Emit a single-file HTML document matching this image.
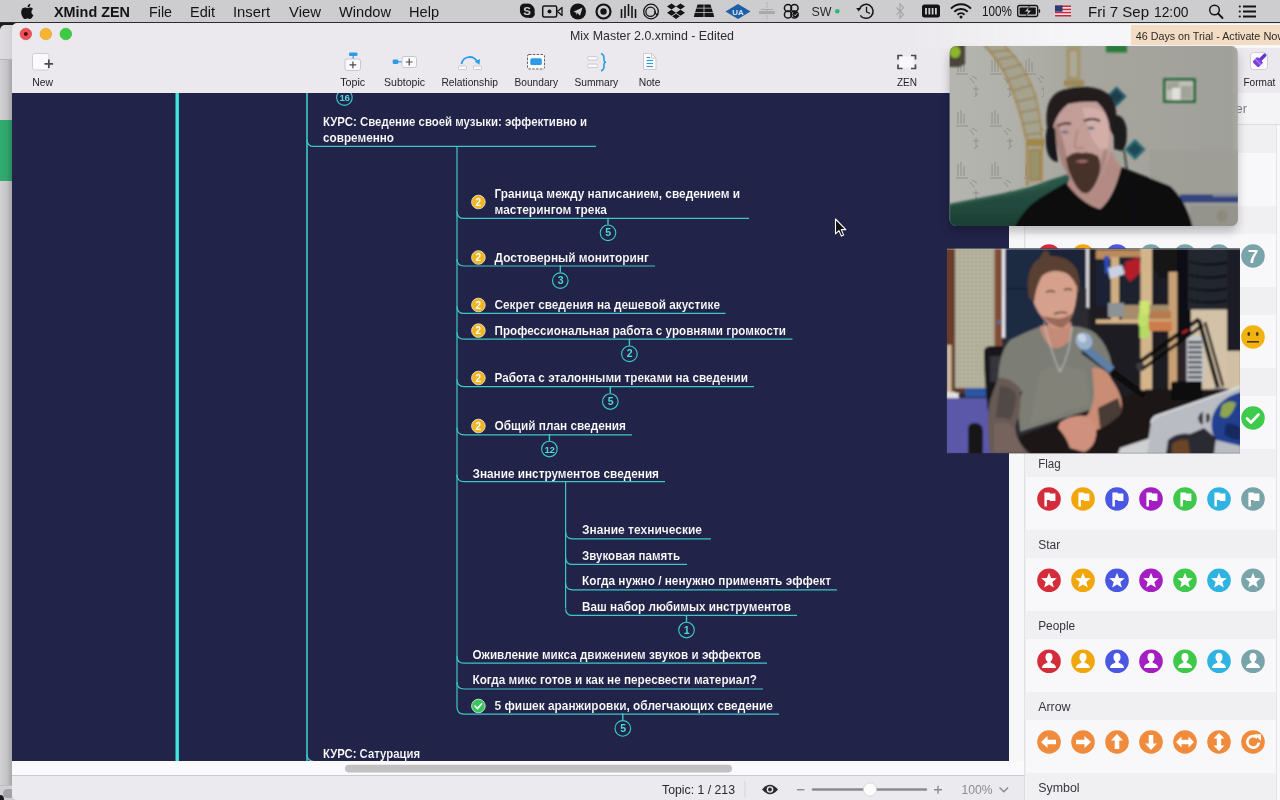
<!DOCTYPE html>
<html><head><meta charset="utf-8">
<style>
*{box-sizing:border-box;margin:0;padding:0}
html,body{width:1280px;height:800px;overflow:hidden;background:#c9c8ca;font-family:"Liberation Sans",sans-serif;}
.abs{position:absolute}
svg{will-change:transform}
#menubar{left:0;top:0;width:1280px;height:23px;background:#cdccce;border-bottom:1px solid #2c2c2e}
#menubar span{position:absolute;top:2px;font-size:15px;color:#141414;white-space:nowrap}
#leftstrip{left:0;top:23px;width:12px;height:777px;background:linear-gradient(90deg,#d2d1d3 0,#c6c5c8 55%,#a5a4a8 100%)}
#win{left:12px;top:23px;width:1268px;height:777px;background:#ebe9ed;border-radius:5px 0 0 5px;overflow:hidden}
#canvas{left:0;top:70px;width:997px;height:668px;background:#212349}
.lbl{position:absolute;top:75.5px;font-size:11px;color:#2a2a2c;white-space:nowrap;transform:translateX(-50%)}
#panel{left:1013px;top:70px;width:255px;height:707px;background:#f8f7f9}
.band{position:absolute;left:0;width:251px;height:28px;background:#efeef1}
</style></head>
<body>
<div id="leftstrip" class="abs"></div>
<div class="abs" style="left:0;top:23px;width:16px;height:8px;background:#1c1c1e"></div>
<div class="abs" style="left:0;top:25px;width:16px;height:34px;background:linear-gradient(90deg,#dddcde 0,#d6d5d8 60%,#c2c1c5 100%);border-radius:5px 0 0 0"></div>
<div class="abs" style="left:0;top:59px;width:12px;height:1px;background:#b4b3b7"></div>
<div class="abs" style="left:0;top:120px;width:12px;height:61px;background:linear-gradient(90deg,#31ab70 0,#2ea46b 60%,#27895a 100%)"></div>
<div id="win" class="abs">
  <div id="canvas" class="abs"></div>
  <div class="abs" style="left:0;top:738px;width:1013px;height:15px;background:#faf9fb;border-bottom:1px solid #c9c8cb"></div>
  <div class="abs" style="left:0;top:753px;width:1013px;height:24px;background:#ebeaee"></div>
  <div class="abs" style="left:997px;top:70px;width:16px;height:668px;background:#f6f5f7"></div>
  <div id="panel" class="abs"></div>
</div>
<div id="menubar" class="abs"></div>
<svg class="abs" style="left:0;top:0" width="1280" height="23" viewBox="0 0 1280 23" font-family="Liberation Sans, sans-serif">
<g transform="translate(19.5,2.5) scale(0.95)" fill="#141414"><path d="M12.6 9.9c0-2 1.6-2.9 1.7-3-0.9-1.4-2.4-1.5-2.9-1.6-1.2-0.1-2.4 0.7-3 0.7-0.6 0-1.6-0.7-2.6-0.7C4.400 5.300 3.100 6.100 2.400 7.300 1 9.800 2 13.400 3.400 15.400c0.700 1 1.500 2.100 2.500 2 1-0.040 1.400-0.650 2.600-0.650 1.200 0 1.600 0.650 2.600 0.630 1.100-0.020 1.800-1 2.400-2 0.800-1.100 1.100-2.200 1.100-2.300-0.020-0.010-2.100-0.800-2.100-3.200z"/><path d="M10.700 3.900c0.500-0.700 0.900-1.600 0.800-2.500-0.800 0.030-1.700 0.500-2.300 1.200-0.500 0.600-0.900 1.500-0.800 2.400 0.900 0.070 1.800-0.450 2.300-1.100z"/></g>
<text x="54" y="16.5" font-size="15" font-weight="bold" fill="#141414" text-anchor="start" textLength="76" lengthAdjust="spacingAndGlyphs" >XMind ZEN</text>
<text x="149" y="16.5" font-size="15" font-weight="normal" fill="#141414" text-anchor="start" textLength="23" lengthAdjust="spacingAndGlyphs" >File</text>
<text x="190" y="16.5" font-size="15" font-weight="normal" fill="#141414" text-anchor="start" textLength="25" lengthAdjust="spacingAndGlyphs" >Edit</text>
<text x="233" y="16.5" font-size="15" font-weight="normal" fill="#141414" text-anchor="start" textLength="37" lengthAdjust="spacingAndGlyphs" >Insert</text>
<text x="289" y="16.5" font-size="15" font-weight="normal" fill="#141414" text-anchor="start" textLength="32" lengthAdjust="spacingAndGlyphs" >View</text>
<text x="339" y="16.5" font-size="15" font-weight="normal" fill="#141414" text-anchor="start" textLength="52" lengthAdjust="spacingAndGlyphs" >Window</text>
<text x="409" y="16.5" font-size="15" font-weight="normal" fill="#141414" text-anchor="start" textLength="30" lengthAdjust="spacingAndGlyphs" >Help</text>
<path d="M520 7 a4.5 4.500 0 0 1 6-3.300 a7.300 7.300 0 0 1 8.600 8.400 a4.500 4.500 0 0 1 -6 5.600 a7.300 7.300 0 0 1 -8.600 -8.400 a4.500 4.500 0 0 1 0 -2.300z" fill="#141414"/>
<text x="527.2" y="15.4" font-size="11.5" font-weight="bold" fill="#cdccce" text-anchor="middle" >S</text>
<rect x="542.7" y="6" width="14" height="11" rx="1.5" fill="none" stroke="#141414" stroke-width="1.500"/><circle cx="549.5" cy="11.5" r="2" fill="#141414"/><path d="M557.5 11.5 L562 7.500 V15.500z" fill="none" stroke="#141414" stroke-width="1.300" stroke-linejoin="round"/>
<circle cx="578" cy="11.5" r="8" fill="#141414"/><path d="M573.5 11.800 L582.500 7.500 L580 15.800 L577.500 13 L576.500 15 L576.300 12.700z" fill="#cdccce"/>
<circle cx="603.5" cy="11.5" r="7" fill="none" stroke="#141414" stroke-width="2.200"/><circle cx="603.5" cy="11.5" r="3.200" fill="#141414"/>
<path d="M621.5 9 V18" stroke="#141414" stroke-width="1.600"/>
<path d="M625 6 V18" stroke="#141414" stroke-width="1.600"/>
<path d="M628.5 4 V16" stroke="#141414" stroke-width="1.600"/>
<path d="M632 6 V18" stroke="#141414" stroke-width="1.600"/>
<path d="M635.5 9 V18" stroke="#141414" stroke-width="1.600"/>
<circle cx="651" cy="11.5" r="7.300" fill="none" stroke="#141414" stroke-width="1.300"/><circle cx="650.5" cy="11.800" r="4.600" fill="none" stroke="#141414" stroke-width="1.300"/><path d="M655.200 11 q0 4.500 3 3" fill="none" stroke="#141414" stroke-width="1.200"/>
<g fill="#141414"><path d="M671.500 3.500 l-4.500 3 l4.500 3 l4.500 -3z"/><path d="M680.500 3.500 l-4.500 3 l4.500 3 l4.500 -3z"/><path d="M671.500 9.700 l-4.500 3 l4.500 3 l4.500 -3z"/><path d="M680.500 9.700 l-4.500 3 l4.500 3 l4.500 -3z"/><path d="M676 13.800 l-3.800 2.500 l3.800 2.600 l3.800 -2.600z"/></g>
<g fill="#141414"><path d="M697.500 4.500 h13 l1 3.300 h-15z"/><path d="M696.200 8.600 h15.600 l1 3.400 h-17.600z"/><path d="M694.800 12.800 h18.400 l1 4.200 h-20.400z"/></g><path d="M704 4.500 V17" stroke="#cdccce" stroke-width="0.800"/>
<path d="M725.500 11.500 L738 4 L750.500 11.500 L738 19z" fill="#1d5ea6"/>
<text x="738" y="14.8" font-size="8" font-weight="bold" fill="#d8e4f2" text-anchor="middle" >UA</text>
<g stroke="#a9a8ab" fill="none"><path d="M767 2.500 V19.500" stroke-width="1" stroke-dasharray="2 1.200"/><path d="M759 11 h16 v3 h-16z" fill="#a9a8ab" stroke="none"/><path d="M761 9.500 h12" stroke-width="1"/></g>
<g fill="none" stroke="#141414" stroke-width="1.500"><circle cx="788" cy="8" r="3.600"/><circle cx="794.500" cy="8" r="3.600"/><circle cx="788" cy="14.500" r="3.600"/><circle cx="794.500" cy="14.500" r="3.600"/></g><circle cx="795.500" cy="14.500" r="3" fill="#141414"/><path d="M794 14.500 l1.200 1.300 l2-2.500" stroke="#cdccce" stroke-width="1" fill="none"/>
<text x="811.5" y="16" font-size="13.5" font-weight="normal" fill="#2a2a2a" text-anchor="start" textLength="20" lengthAdjust="spacingAndGlyphs" >SW</text>
<circle cx="837.300" cy="11.300" r="2.300" fill="#2fb875"/>
<path d="M859.500 9 A7 7 0 1 1 860.300 15.300" fill="none" stroke="#141414" stroke-width="1.500"/><path d="M856.200 8 h5 l-2.500 3.600z" fill="#141414"/><path d="M866.500 6.800 V11.800 L870 13.500" fill="none" stroke="#141414" stroke-width="1.300"/>
<path d="M896.500 7.500 L903.500 14.500 L900 18 V4 L903.500 7.800 L896.500 14.800" fill="none" stroke="#a5a4a7" stroke-width="1.100"/>
<rect x="922" y="4.500" width="18" height="13" rx="2.500" fill="#141414"/>
<rect x="925.1" y="8" width="1.800" height="6.500" fill="#cdccce"/>
<rect x="928.4" y="8" width="1.800" height="6.500" fill="#cdccce"/>
<rect x="931.7" y="8" width="1.800" height="6.500" fill="#cdccce"/>
<rect x="935.0" y="8" width="1.800" height="6.500" fill="#cdccce"/>
<g fill="none" stroke="#141414" stroke-width="2" stroke-linecap="butt"><path d="M951 8.600 A13.500 13.500 0 0 1 971 8.600"/><path d="M954.300 11.700 A9.500 9.500 0 0 1 967.700 11.700"/><path d="M957.500 14.700 A5 5 0 0 1 964.500 14.700"/></g><circle cx="961" cy="17" r="1.500" fill="#141414"/>
<text x="982" y="16" font-size="14.5" font-weight="normal" fill="#141414" text-anchor="start" textLength="30" lengthAdjust="spacingAndGlyphs" >100%</text>
<rect x="1017.700" y="5.500" width="20" height="11" rx="2" fill="none" stroke="#141414" stroke-width="1.300"/><rect x="1019.600" y="7.400" width="16.200" height="7.200" rx="0.800" fill="#141414"/><path d="M1038.700 9 q1.600 0 1.600 2 q0 2 -1.600 2z" fill="#141414"/><path d="M1029.500 5.800 l-5 6 h3.200 l-1.700 5 l5.500-6.600 h-3.300z" fill="#cdccce" stroke="#141414" stroke-width="0.600"/>
<rect x="1055" y="5.500" width="16" height="11" fill="#c9283a"/>
<rect x="1055" y="7.07" width="16" height="1.570" fill="#f0eef0"/>
<rect x="1055" y="10.21" width="16" height="1.570" fill="#f0eef0"/>
<rect x="1055" y="13.35" width="16" height="1.570" fill="#f0eef0"/>
<rect x="1055" y="5.500" width="7.500" height="6.200" fill="#2b3a78"/>
<text x="1088" y="16.5" font-size="15" font-weight="normal" fill="#141414" text-anchor="start" textLength="61" lengthAdjust="spacingAndGlyphs" >Fri 7 Sep</text>
<text x="1154" y="16.5" font-size="15" font-weight="normal" fill="#141414" text-anchor="start" textLength="34.5" lengthAdjust="spacingAndGlyphs" >12:00</text>
<circle cx="1214.500" cy="10" r="4.800" fill="none" stroke="#141414" stroke-width="1.500"/><path d="M1218 13.500 L1222.500 18" stroke="#141414" stroke-width="1.800" stroke-linecap="round"/>
<circle cx="1239.800" cy="6.5" r="1.100" fill="#141414"/><path d="M1243 6.5 H1256" stroke="#141414" stroke-width="2"/>
<circle cx="1239.800" cy="11.5" r="1.100" fill="#141414"/><path d="M1243 11.5 H1256" stroke="#141414" stroke-width="2"/>
<circle cx="1239.800" cy="16.5" r="1.100" fill="#141414"/><path d="M1243 16.5 H1256" stroke="#141414" stroke-width="2"/>
</svg>
<svg class="abs" style="left:0;top:23px" width="1280" height="70" viewBox="0 23 1280 70" font-family="Liberation Sans, sans-serif">
<circle cx="25.800" cy="34" r="5.800" fill="#ee4f58" stroke="#d8404a" stroke-width="0.600"/><circle cx="25.800" cy="34" r="2" fill="#4a0d10"/>
<circle cx="45.800" cy="34" r="5.800" fill="#f6b531" stroke="#dda128" stroke-width="0.600"/>
<circle cx="65.800" cy="34" r="5.800" fill="#3ccb42" stroke="#2fb236" stroke-width="0.600"/>
<text x="570" y="40" font-size="13" font-weight="normal" fill="#2c2c2e" text-anchor="start" textLength="164" lengthAdjust="spacingAndGlyphs" >Mix Master 2.0.xmind - Edited</text>
<defs><linearGradient id="glow" x1="0" x2="1"><stop offset="0" stop-color="#fff" stop-opacity="0"/><stop offset="0.45" stop-color="#fff" stop-opacity="0.55"/><stop offset="1" stop-color="#fff" stop-opacity="0.6"/></linearGradient></defs><rect x="900" y="24" width="380" height="24" fill="url(#glow)"/>
<rect x="1131" y="25" width="149" height="20" fill="#f3dcc4"/>
<text x="1135.8" y="39.5" font-size="11.5" font-weight="normal" fill="#2c2a28" text-anchor="start" textLength="124.5" lengthAdjust="spacingAndGlyphs" >46 Days on Trial - Activate</text>
<text x="1263.4" y="39.5" font-size="11.5" font-weight="normal" fill="#2c2a28" text-anchor="start" textLength="22" lengthAdjust="spacingAndGlyphs" >Now</text>
<rect x="32.500" y="53.500" width="16.500" height="16.500" rx="2" fill="#fafafc" stroke="#cfcdd2" stroke-width="1"/>
<path d="M44.500 63.800 h8.600 M48.800 59.500 v8.600" stroke="#4a4a4c" stroke-width="1.700"/>
<rect x="349" y="52.500" width="8.500" height="3.600" rx="1.300" fill="#2f9be8"/><path d="M353.200 56 v3" stroke="#2f9be8" stroke-width="1.200"/>
<rect x="345" y="59" width="15.500" height="11.500" rx="2" fill="#fafafc" stroke="#c8c6cb" stroke-width="1"/><path d="M349.500 64.800 h6.800 M352.900 61.400 v6.800" stroke="#4a4a4c" stroke-width="1.200"/>
<rect x="392.700" y="59.500" width="5.600" height="4.600" rx="1.300" fill="#2f9be8"/><path d="M398 61.800 h4" stroke="#2f9be8" stroke-width="1.200"/>
<rect x="402" y="56.500" width="14.500" height="11" rx="2" fill="#fafafc" stroke="#c8c6cb" stroke-width="1"/><path d="M405.800 62 h6.800 M409.200 58.600 v6.800" stroke="#4a4a4c" stroke-width="1.200"/>
<path d="M461.500 64 A8.300 8.300 0 0 1 477.500 62.500" fill="none" stroke="#2f9be8" stroke-width="1.800"/><path d="M474.800 61.500 l4.600 3.200 l0.700 -5.600z" fill="#2f9be8"/>
<rect x="458.500" y="66" width="8" height="3.500" rx="0.800" fill="#fafafc" stroke="#c8c6cb" stroke-width="0.900"/><rect x="473.500" y="66" width="8" height="3.500" rx="0.800" fill="#fafafc" stroke="#c8c6cb" stroke-width="0.900"/>
<rect x="527.500" y="54.500" width="17" height="14.500" rx="1.500" fill="#fafafc" stroke="#555" stroke-width="0.900" stroke-dasharray="2.500 1.300"/><rect x="530.300" y="58.300" width="11.500" height="6.800" rx="1.500" fill="#2f9be8"/>
<rect x="587.500" y="56.500" width="10" height="3.600" rx="1.500" fill="#fafafc" stroke="#c8c6cb" stroke-width="0.900"/><rect x="587.500" y="64" width="10" height="3.600" rx="1.500" fill="#fafafc" stroke="#c8c6cb" stroke-width="0.900"/>
<path d="M601 53.500 q3 1 3 4.500 v2.500 q0 1.500 2 1.700 q-2 0.200 -2 1.700 v2.500 q0 3.500 -3 4.500" fill="none" stroke="#2f9be8" stroke-width="1.600"/>
<path d="M643.500 53.500 h8 l4.500 4.500 v11.500 h-12.500z" fill="#fcfcfd" stroke="#c8c6cb" stroke-width="0.900"/><path d="M651.500 53.500 v4.500 h4.500" fill="none" stroke="#c8c6cb" stroke-width="0.900"/>
<path d="M646.500 57.5 H650" stroke="#2f9be8" stroke-width="1.100"/>
<path d="M646.500 60.5 H653" stroke="#2f9be8" stroke-width="1.100"/>
<path d="M646.500 63.5 H653" stroke="#2f9be8" stroke-width="1.100"/>
<path d="M646.500 66.5 H653" stroke="#2f9be8" stroke-width="1.100"/>
<rect x="899.500" y="56.500" width="14" height="11" fill="#f8f7fa"/>
<path d="M898 59.500 v-4 h4.500 M911 55.500 h4.500 v4 M915.500 64.500 v4 h-4.500 M902.500 68.500 h-4.500 v-4" fill="none" stroke="#4a4a4c" stroke-width="1.700"/>
<rect x="1250.500" y="52.500" width="17" height="17" rx="3" fill="#fbfafc" stroke="#cfcdd2" stroke-width="1"/>
<g transform="translate(1259.5,60.5) rotate(45) scale(1.2)"><rect x="-3.400" y="-1" width="6.800" height="6" rx="1" fill="#7b3fe0"/><rect x="-1.400" y="-7.500" width="2.800" height="7" rx="1" fill="#6a35cf"/><rect x="-3.400" y="1" width="6.800" height="1.200" fill="#a77df0"/></g>
</svg>
<svg class="abs" style="left:0;top:74px" width="1280" height="18" viewBox="0 74 1280 18" font-family="Liberation Sans, sans-serif">
<text x="32.2" y="85.800" font-size="11" fill="#242426" textLength="20.7" lengthAdjust="spacingAndGlyphs">New</text>
<text x="340.2" y="85.800" font-size="11" fill="#242426" textLength="25" lengthAdjust="spacingAndGlyphs">Topic</text>
<text x="384.1" y="85.800" font-size="11" fill="#242426" textLength="41" lengthAdjust="spacingAndGlyphs">Subtopic</text>
<text x="441.4" y="85.800" font-size="11" fill="#242426" textLength="56.5" lengthAdjust="spacingAndGlyphs">Relationship</text>
<text x="514.5" y="85.800" font-size="11" fill="#242426" textLength="43.5" lengthAdjust="spacingAndGlyphs">Boundary</text>
<text x="574.4" y="85.800" font-size="11" fill="#242426" textLength="43.8" lengthAdjust="spacingAndGlyphs">Summary</text>
<text x="638.7" y="85.800" font-size="11" fill="#242426" textLength="21.8" lengthAdjust="spacingAndGlyphs">Note</text>
<text x="897.0" y="85.800" font-size="11" fill="#242426" textLength="20" lengthAdjust="spacingAndGlyphs">ZEN</text>
<text x="1243.4" y="85.800" font-size="11" fill="#242426" textLength="32" lengthAdjust="spacingAndGlyphs">Format</text>
</svg>
<svg class="abs" style="left:0;top:0;will-change:transform" width="1280" height="800" viewBox="0 0 1280 800">
<defs><clipPath id="cv"><rect x="12" y="93" width="997" height="668"/></clipPath></defs>
<g clip-path="url(#cv)" font-family="Liberation Sans, sans-serif">
<rect x="175.5" y="93" width="3.4" height="668" fill="#3fe6de"/>
<path d="M307 93 V761" stroke="#3cc8c8" stroke-width="1.6" fill="none"/>
<circle cx="344.4" cy="97.6" r="7.8" fill="#212349" stroke="#3cc8c8" stroke-width="1.15"/>
<text x="344.4" y="101.19999999999999" font-size="9.8" font-weight="bold" fill="#52d6d6" text-anchor="middle" letter-spacing="-0.5">16</text>
<text x="323" y="126" font-size="13" font-weight="bold" fill="#ffffff" stroke="#212349" stroke-width="0.12" textLength="264.0" lengthAdjust="spacingAndGlyphs">КУРС: Сведение своей музыки: эффективно и</text>
<text x="323" y="142" font-size="13" font-weight="bold" fill="#ffffff" stroke="#212349" stroke-width="0.12" textLength="71.0" lengthAdjust="spacingAndGlyphs">современно</text>
<path d="M307 139.4 Q307 146.4 314 146.4 H596" stroke="#3cc8c8" stroke-width="1.2" fill="none"/>
<path d="M457 146 V707" stroke="#3cc8c8" stroke-width="1.2" fill="none"/>
<circle cx="478.4" cy="202" r="6.8" fill="#f3b51d" stroke="#e9e2c8" stroke-width="0.9"/>
<text x="478.4" y="205.6" font-size="10" font-weight="bold" fill="#fff" text-anchor="middle">2</text>
<text x="494.5" y="198" font-size="13" font-weight="bold" fill="#ffffff" stroke="#212349" stroke-width="0.12" textLength="245.5" lengthAdjust="spacingAndGlyphs">Граница между написанием, сведением и</text>
<text x="494.5" y="214" font-size="13" font-weight="bold" fill="#ffffff" stroke="#212349" stroke-width="0.12" textLength="112.5" lengthAdjust="spacingAndGlyphs">мастерингом трека</text>
<path d="M457 211.4 Q457 218.4 464 218.4 H749" stroke="#3cc8c8" stroke-width="1.2" fill="none"/>
<path d="M608 217.8 V224.8" stroke="#3cc8c8" stroke-width="1.4"/>
<circle cx="608" cy="232.8" r="7.8" fill="#212349" stroke="#3cc8c8" stroke-width="1.15"/>
<text x="608" y="236.4" font-size="10.5" font-weight="bold" fill="#52d6d6" text-anchor="middle" letter-spacing="-0.5">5</text>
<circle cx="478.4" cy="257.5" r="6.8" fill="#f3b51d" stroke="#e9e2c8" stroke-width="0.9"/>
<text x="478.4" y="261.1" font-size="10" font-weight="bold" fill="#fff" text-anchor="middle">2</text>
<text x="494.5" y="262" font-size="13" font-weight="bold" fill="#ffffff" stroke="#212349" stroke-width="0.12" textLength="154.5" lengthAdjust="spacingAndGlyphs">Достоверный мониторинг</text>
<path d="M457 259.0 Q457 266.0 464 266.0 H655" stroke="#3cc8c8" stroke-width="1.2" fill="none"/>
<path d="M560.3 265.6 V272.6" stroke="#3cc8c8" stroke-width="1.4"/>
<circle cx="560.3" cy="280.6" r="7.8" fill="#212349" stroke="#3cc8c8" stroke-width="1.15"/>
<text x="560.3" y="284.20000000000005" font-size="10.5" font-weight="bold" fill="#52d6d6" text-anchor="middle" letter-spacing="-0.5">3</text>
<circle cx="478.4" cy="305" r="6.8" fill="#f3b51d" stroke="#e9e2c8" stroke-width="0.9"/>
<text x="478.4" y="308.6" font-size="10" font-weight="bold" fill="#fff" text-anchor="middle">2</text>
<text x="494.5" y="308.8" font-size="13" font-weight="bold" fill="#ffffff" stroke="#212349" stroke-width="0.12" textLength="225.5" lengthAdjust="spacingAndGlyphs">Секрет сведения на дешевой акустике</text>
<path d="M457 306.4 Q457 313.4 464 313.4 H725.5" stroke="#3cc8c8" stroke-width="1.2" fill="none"/>
<circle cx="478.4" cy="330.6" r="6.8" fill="#f3b51d" stroke="#e9e2c8" stroke-width="0.9"/>
<text x="478.4" y="334.20000000000005" font-size="10" font-weight="bold" fill="#fff" text-anchor="middle">2</text>
<text x="494.5" y="334.7" font-size="13" font-weight="bold" fill="#ffffff" stroke="#212349" stroke-width="0.12" textLength="291.5" lengthAdjust="spacingAndGlyphs">Профессиональная работа с уровнями громкости</text>
<path d="M457 332.2 Q457 339.2 464 339.2 H792.5" stroke="#3cc8c8" stroke-width="1.2" fill="none"/>
<path d="M629.4 338.8 V345.8" stroke="#3cc8c8" stroke-width="1.4"/>
<circle cx="629.4" cy="353.8" r="7.8" fill="#212349" stroke="#3cc8c8" stroke-width="1.15"/>
<text x="629.4" y="357.40000000000003" font-size="10.5" font-weight="bold" fill="#52d6d6" text-anchor="middle" letter-spacing="-0.5">2</text>
<circle cx="478.4" cy="378" r="6.8" fill="#f3b51d" stroke="#e9e2c8" stroke-width="0.9"/>
<text x="478.4" y="381.6" font-size="10" font-weight="bold" fill="#fff" text-anchor="middle">2</text>
<text x="494.5" y="381.6" font-size="13" font-weight="bold" fill="#ffffff" stroke="#212349" stroke-width="0.12" textLength="253.5" lengthAdjust="spacingAndGlyphs">Работа с эталонными треками на сведении</text>
<path d="M457 379.6 Q457 386.6 464 386.6 H754" stroke="#3cc8c8" stroke-width="1.2" fill="none"/>
<path d="M610.3 386.5 V393.5" stroke="#3cc8c8" stroke-width="1.4"/>
<circle cx="610.3" cy="401.5" r="7.8" fill="#212349" stroke="#3cc8c8" stroke-width="1.15"/>
<text x="610.3" y="405.1" font-size="10.5" font-weight="bold" fill="#52d6d6" text-anchor="middle" letter-spacing="-0.5">5</text>
<circle cx="478.4" cy="426" r="6.8" fill="#f3b51d" stroke="#e9e2c8" stroke-width="0.9"/>
<text x="478.4" y="429.6" font-size="10" font-weight="bold" fill="#fff" text-anchor="middle">2</text>
<text x="494.5" y="429.7" font-size="13" font-weight="bold" fill="#ffffff" stroke="#212349" stroke-width="0.12" textLength="131.5" lengthAdjust="spacingAndGlyphs">Общий план сведения</text>
<path d="M457 427.8 Q457 434.8 464 434.8 H632" stroke="#3cc8c8" stroke-width="1.2" fill="none"/>
<path d="M549.4 434 V441" stroke="#3cc8c8" stroke-width="1.4"/>
<circle cx="549.4" cy="449" r="7.8" fill="#212349" stroke="#3cc8c8" stroke-width="1.15"/>
<text x="549.4" y="452.6" font-size="9.8" font-weight="bold" fill="#52d6d6" text-anchor="middle" letter-spacing="-0.5">12</text>
<text x="472.5" y="477.6" font-size="13" font-weight="bold" fill="#ffffff" stroke="#212349" stroke-width="0.12" textLength="186.5" lengthAdjust="spacingAndGlyphs">Знание инструментов сведения</text>
<path d="M457 474.7 Q457 481.7 464 481.7 H665" stroke="#3cc8c8" stroke-width="1.2" fill="none"/>
<path d="M565.6 481.3 V608" stroke="#3cc8c8" stroke-width="1.2" fill="none"/>
<text x="582" y="534" font-size="13" font-weight="bold" fill="#ffffff" stroke="#212349" stroke-width="0.12" textLength="120.0" lengthAdjust="spacingAndGlyphs">Знание технические</text>
<path d="M565.6 531.8 Q565.6 538.8 572.6 538.8 H711" stroke="#3cc8c8" stroke-width="1.2" fill="none"/>
<text x="582" y="560" font-size="13" font-weight="bold" fill="#ffffff" stroke="#212349" stroke-width="0.12" textLength="98.0" lengthAdjust="spacingAndGlyphs">Звуковая память</text>
<path d="M565.6 557.4 Q565.6 564.4 572.6 564.4 H687" stroke="#3cc8c8" stroke-width="1.2" fill="none"/>
<text x="582" y="585" font-size="13" font-weight="bold" fill="#ffffff" stroke="#212349" stroke-width="0.12" textLength="249.0" lengthAdjust="spacingAndGlyphs">Когда нужно / ненужно применять эффект</text>
<path d="M565.6 582.8 Q565.6 589.8 572.6 589.8 H837" stroke="#3cc8c8" stroke-width="1.2" fill="none"/>
<text x="582" y="611" font-size="13" font-weight="bold" fill="#ffffff" stroke="#212349" stroke-width="0.12" textLength="209.0" lengthAdjust="spacingAndGlyphs">Ваш набор любимых инструментов</text>
<path d="M565.6 608.4 Q565.6 615.4 572.6 615.4 H797" stroke="#3cc8c8" stroke-width="1.2" fill="none"/>
<path d="M686.5 615 V622" stroke="#3cc8c8" stroke-width="1.4"/>
<circle cx="686.5" cy="630" r="7.8" fill="#212349" stroke="#3cc8c8" stroke-width="1.15"/>
<text x="686.5" y="633.6" font-size="10.5" font-weight="bold" fill="#52d6d6" text-anchor="middle" letter-spacing="-0.5">1</text>
<text x="472.5" y="658.5" font-size="13" font-weight="bold" fill="#ffffff" stroke="#212349" stroke-width="0.12" textLength="288.5" lengthAdjust="spacingAndGlyphs">Оживление микса движением звуков и эффектов</text>
<path d="M457 656.2 Q457 663.2 464 663.2 H767" stroke="#3cc8c8" stroke-width="1.2" fill="none"/>
<text x="472.5" y="683.6" font-size="13" font-weight="bold" fill="#ffffff" stroke="#212349" stroke-width="0.12" textLength="284.5" lengthAdjust="spacingAndGlyphs">Когда микс готов и как не пересвести материал?</text>
<path d="M457 682.0 Q457 689.0 464 689.0 H763" stroke="#3cc8c8" stroke-width="1.2" fill="none"/>
<circle cx="478.4" cy="706" r="6.8" fill="#35c759" stroke="#d6ead8" stroke-width="0.9"/>
<path d="M475.09999999999997 706.2 l2.3 2.4 l4.3 -4.8" stroke="#fff" stroke-width="1.7" fill="none" stroke-linecap="round" stroke-linejoin="round"/>
<text x="494.5" y="709.6" font-size="13" font-weight="bold" fill="#ffffff" stroke="#212349" stroke-width="0.12" textLength="278.5" lengthAdjust="spacingAndGlyphs">5 фишек аранжировки, облегчающих сведение</text>
<path d="M457 707.1 Q457 714.1 464 714.1 H779" stroke="#3cc8c8" stroke-width="1.2" fill="none"/>
<path d="M622.8 713.4 V720.4" stroke="#3cc8c8" stroke-width="1.4"/>
<circle cx="622.8" cy="728.4" r="7.8" fill="#212349" stroke="#3cc8c8" stroke-width="1.15"/>
<text x="622.8" y="732.0" font-size="10.5" font-weight="bold" fill="#52d6d6" text-anchor="middle" letter-spacing="-0.5">5</text>
<text x="323" y="758" font-size="13" font-weight="bold" fill="#ffffff" stroke="#212349" stroke-width="0.12" textLength="97.0" lengthAdjust="spacingAndGlyphs">КУРС: Сатурация</text>
<path d="M307 754 Q307 761 314 761.6 H430" stroke="#3cc8c8" stroke-width="1.2" fill="none"/>
</g></svg>
<svg class="abs" style="left:1009px;top:93px" width="271" height="707" viewBox="1009 93 271 707" font-family="Liberation Sans, sans-serif">
<rect x="1009" y="93" width="16" height="668" fill="#f7f6f8"/>
<rect x="1025" y="93" width="255" height="707" fill="#f8f7fa"/>
<rect x="1024.300" y="93" width="1" height="707" fill="#d9d8dc"/>
<rect x="1025" y="93" width="255" height="31.500" fill="#f4f3f6"/>
<rect x="1025" y="124" width="255" height="1" fill="#dcdbdf"/>
<text x="1235.6" y="113.2" font-size="13" font-weight="normal" fill="#7f7e85" text-anchor="start" >er</text>
<rect x="1025" y="125" width="251" height="28" fill="#f0eff2"/>
<rect x="1025" y="206" width="251" height="28" fill="#f0eff2"/>
<rect x="1025" y="287" width="251" height="28" fill="#f0eff2"/>
<rect x="1025" y="368" width="251" height="28" fill="#f0eff2"/>
<rect x="1025" y="449" width="251" height="28" fill="#f0eff2"/>
<text x="1038.2" y="467.8" font-size="12" font-weight="normal" fill="#36363e" text-anchor="start" textLength="22.5" lengthAdjust="spacingAndGlyphs" >Flag</text>
<rect x="1025" y="530" width="251" height="28" fill="#f0eff2"/>
<text x="1038.2" y="548.8" font-size="12" font-weight="normal" fill="#36363e" text-anchor="start" textLength="22" lengthAdjust="spacingAndGlyphs" >Star</text>
<rect x="1025" y="611" width="251" height="28" fill="#f0eff2"/>
<text x="1038.2" y="629.8" font-size="12" font-weight="normal" fill="#36363e" text-anchor="start" textLength="37" lengthAdjust="spacingAndGlyphs" >People</text>
<rect x="1025" y="692" width="251" height="28" fill="#f0eff2"/>
<text x="1038.2" y="710.8" font-size="12" font-weight="normal" fill="#36363e" text-anchor="start" textLength="32.4" lengthAdjust="spacingAndGlyphs" >Arrow</text>
<rect x="1025" y="773" width="251" height="28" fill="#f0eff2"/>
<text x="1038.2" y="791.8" font-size="12" font-weight="normal" fill="#36363e" text-anchor="start" textLength="41.4" lengthAdjust="spacingAndGlyphs" >Symbol</text>
<rect x="1276" y="125" width="0.800" height="675" fill="#e2e1e5"/>
<circle cx="1049" cy="256" r="11.800" fill="#d42c3b"/>
<circle cx="1083" cy="256" r="11.800" fill="#f1a70c"/>
<circle cx="1117" cy="256" r="11.800" fill="#4a57e2"/>
<circle cx="1151" cy="256" r="11.800" fill="#79a4a9"/>
<circle cx="1185" cy="256" r="11.800" fill="#79a4a9"/>
<circle cx="1219" cy="256" r="11.800" fill="#79a4a9"/>
<circle cx="1253" cy="256" r="11.800" fill="#79a4a9"/>
<text x="1253" y="262.9" font-size="19" font-weight="bold" fill="#fff" text-anchor="middle" >7</text>
<circle cx="1253" cy="337" r="11.800" fill="#f2b20f"/><ellipse cx="1248.800" cy="334" rx="1.400" ry="1.900" fill="#4a3a10"/><ellipse cx="1257.200" cy="334" rx="1.400" ry="1.900" fill="#4a3a10"/><path d="M1247 341.800 H1259" stroke="#4a3a10" stroke-width="1.600"/>
<circle cx="1253" cy="418" r="11.800" fill="#3ecb4c"/><path d="M1247 418.500 l4 4 l7.500 -8" fill="none" stroke="#fff" stroke-width="2.600" stroke-linecap="round" stroke-linejoin="round"/>
<circle cx="1049" cy="499" r="11.800" fill="#d42c3b"/>
<path d="M1044.4 492.6 h5.400 v1 h5.600 v7.300 h-5.600 v-1 h-2.900 v6.700 h-2.500z" fill="#fff"/>
<circle cx="1083" cy="499" r="11.800" fill="#f1a70c"/>
<path d="M1078.4 492.6 h5.400 v1 h5.600 v7.300 h-5.600 v-1 h-2.900 v6.700 h-2.500z" fill="#fff"/>
<circle cx="1117" cy="499" r="11.800" fill="#4a57e2"/>
<path d="M1112.4 492.6 h5.400 v1 h5.600 v7.300 h-5.600 v-1 h-2.900 v6.700 h-2.500z" fill="#fff"/>
<circle cx="1151" cy="499" r="11.800" fill="#a41fc2"/>
<path d="M1146.4 492.6 h5.400 v1 h5.600 v7.300 h-5.600 v-1 h-2.900 v6.700 h-2.500z" fill="#fff"/>
<circle cx="1185" cy="499" r="11.800" fill="#3fc94b"/>
<path d="M1180.4 492.6 h5.400 v1 h5.600 v7.300 h-5.600 v-1 h-2.900 v6.700 h-2.500z" fill="#fff"/>
<circle cx="1219" cy="499" r="11.800" fill="#2fb4e2"/>
<path d="M1214.4 492.6 h5.400 v1 h5.600 v7.300 h-5.600 v-1 h-2.900 v6.700 h-2.500z" fill="#fff"/>
<circle cx="1253" cy="499" r="11.800" fill="#79a4a9"/>
<path d="M1248.4 492.6 h5.400 v1 h5.600 v7.300 h-5.600 v-1 h-2.900 v6.700 h-2.500z" fill="#fff"/>
<circle cx="1049" cy="580.300" r="11.800" fill="#d42c3b"/>
<polygon points="1049.00,572.70 1051.06,578.07 1056.80,578.37 1052.33,581.98 1053.82,587.53 1049.00,584.40 1044.18,587.53 1045.67,581.98 1041.20,578.37 1046.94,578.07" fill="#fff"/>
<circle cx="1083" cy="580.300" r="11.800" fill="#f1a70c"/>
<polygon points="1083.00,572.70 1085.06,578.07 1090.80,578.37 1086.33,581.98 1087.82,587.53 1083.00,584.40 1078.18,587.53 1079.67,581.98 1075.20,578.37 1080.94,578.07" fill="#fff"/>
<circle cx="1117" cy="580.300" r="11.800" fill="#4a57e2"/>
<polygon points="1117.00,572.70 1119.06,578.07 1124.80,578.37 1120.33,581.98 1121.82,587.53 1117.00,584.40 1112.18,587.53 1113.67,581.98 1109.20,578.37 1114.94,578.07" fill="#fff"/>
<circle cx="1151" cy="580.300" r="11.800" fill="#a41fc2"/>
<polygon points="1151.00,572.70 1153.06,578.07 1158.80,578.37 1154.33,581.98 1155.82,587.53 1151.00,584.40 1146.18,587.53 1147.67,581.98 1143.20,578.37 1148.94,578.07" fill="#fff"/>
<circle cx="1185" cy="580.300" r="11.800" fill="#3fc94b"/>
<polygon points="1185.00,572.70 1187.06,578.07 1192.80,578.37 1188.33,581.98 1189.82,587.53 1185.00,584.40 1180.18,587.53 1181.67,581.98 1177.20,578.37 1182.94,578.07" fill="#fff"/>
<circle cx="1219" cy="580.300" r="11.800" fill="#2fb4e2"/>
<polygon points="1219.00,572.70 1221.06,578.07 1226.80,578.37 1222.33,581.98 1223.82,587.53 1219.00,584.40 1214.18,587.53 1215.67,581.98 1211.20,578.37 1216.94,578.07" fill="#fff"/>
<circle cx="1253" cy="580.300" r="11.800" fill="#79a4a9"/>
<polygon points="1253.00,572.70 1255.06,578.07 1260.80,578.37 1256.33,581.98 1257.82,587.53 1253.00,584.40 1248.18,587.53 1249.67,581.98 1245.20,578.37 1250.94,578.07" fill="#fff"/>
<circle cx="1049" cy="661.300" r="11.800" fill="#d42c3b"/>
<ellipse cx="1049" cy="657.3" rx="3.500" ry="4.200" fill="#fff"/><path d="M1042 668 q0.200 -3.600 4.200 -4.700 l1.200 -0.700 v-2 h3.200 v2 l1.200 0.700 q4 1.100 4.200 4.700z" fill="#fff"/>
<circle cx="1083" cy="661.300" r="11.800" fill="#f1a70c"/>
<ellipse cx="1083" cy="657.3" rx="3.500" ry="4.200" fill="#fff"/><path d="M1076 668 q0.200 -3.600 4.200 -4.700 l1.200 -0.700 v-2 h3.200 v2 l1.200 0.700 q4 1.100 4.200 4.700z" fill="#fff"/>
<circle cx="1117" cy="661.300" r="11.800" fill="#4a57e2"/>
<ellipse cx="1117" cy="657.3" rx="3.500" ry="4.200" fill="#fff"/><path d="M1110 668 q0.200 -3.600 4.200 -4.700 l1.200 -0.700 v-2 h3.200 v2 l1.200 0.700 q4 1.100 4.200 4.700z" fill="#fff"/>
<circle cx="1151" cy="661.300" r="11.800" fill="#a41fc2"/>
<ellipse cx="1151" cy="657.3" rx="3.500" ry="4.200" fill="#fff"/><path d="M1144 668 q0.200 -3.600 4.200 -4.700 l1.200 -0.700 v-2 h3.200 v2 l1.200 0.700 q4 1.100 4.200 4.700z" fill="#fff"/>
<circle cx="1185" cy="661.300" r="11.800" fill="#3fc94b"/>
<ellipse cx="1185" cy="657.3" rx="3.500" ry="4.200" fill="#fff"/><path d="M1178 668 q0.200 -3.600 4.200 -4.700 l1.200 -0.700 v-2 h3.200 v2 l1.200 0.700 q4 1.100 4.200 4.700z" fill="#fff"/>
<circle cx="1219" cy="661.300" r="11.800" fill="#2fb4e2"/>
<ellipse cx="1219" cy="657.3" rx="3.500" ry="4.200" fill="#fff"/><path d="M1212 668 q0.200 -3.600 4.200 -4.700 l1.200 -0.700 v-2 h3.200 v2 l1.200 0.700 q4 1.100 4.200 4.700z" fill="#fff"/>
<circle cx="1253" cy="661.300" r="11.800" fill="#79a4a9"/>
<ellipse cx="1253" cy="657.3" rx="3.500" ry="4.200" fill="#fff"/><path d="M1246 668 q0.200 -3.600 4.200 -4.700 l1.200 -0.700 v-2 h3.200 v2 l1.200 0.700 q4 1.100 4.200 4.700z" fill="#fff"/>
<circle cx="1049" cy="742" r="11.800" fill="#f08a3c"/>
<circle cx="1083" cy="742" r="11.800" fill="#f08a3c"/>
<circle cx="1117" cy="742" r="11.800" fill="#f08a3c"/>
<circle cx="1151" cy="742" r="11.800" fill="#f08a3c"/>
<circle cx="1185" cy="742" r="11.800" fill="#f08a3c"/>
<circle cx="1219" cy="742" r="11.800" fill="#f08a3c"/>
<circle cx="1253" cy="742" r="11.800" fill="#f08a3c"/>
<g transform="translate(1049,742) rotate(0)"><path d="M-8 0 l6.500 -6 v3.700 h8.500 v4.600 h-8.500 v3.700z" fill="#fff"/></g>
<g transform="translate(1083,742) rotate(180)"><path d="M-8 0 l6.500 -6 v3.700 h8.500 v4.600 h-8.500 v3.700z" fill="#fff"/></g>
<g transform="translate(1117,742) rotate(90)"><path d="M-8 0 l6.500 -6 v3.700 h8.500 v4.600 h-8.500 v3.700z" fill="#fff"/></g>
<g transform="translate(1151,742) rotate(270)"><path d="M-8 0 l6.500 -6 v3.700 h8.500 v4.600 h-8.500 v3.700z" fill="#fff"/></g>
<path d="M1176 742 l5.500 -5.500 v3.300 h7 v-3.300 l5.500 5.500 l-5.500 5.500 v-3.300 h-7 v3.300z" fill="#fff"/>
<g transform="translate(1219,742) rotate(90)"><path d="M-9 0 l5.500 -5.500 v3.300 h7 v-3.300 l5.500 5.500 l-5.500 5.500 v-3.300 h-7 v3.300z" fill="#fff"/></g>
<path d="M1257.300 737.800 A5.800 5.800 0 1 0 1258.900 742.600" fill="none" stroke="#fff" stroke-width="2.700"/><path d="M1254.200 734.300 h6.800 v6.800z" fill="#fff"/>
</svg>
<svg class="abs" style="left:0;top:761px" width="1025" height="39" viewBox="0 761 1025 39" font-family="Liberation Sans, sans-serif">
<rect x="345" y="764.800" width="387" height="7.600" rx="3.800" fill="#c1c0c3"/>
<text x="662" y="794" font-size="13" font-weight="normal" fill="#2a2a2c" text-anchor="start" textLength="73" lengthAdjust="spacingAndGlyphs" >Topic: 1 / 213</text>
<rect x="744.500" y="781" width="1" height="16" fill="#d4d3d7"/>
<path d="M762 789.500 q8 -9.500 16 0 q-8 9.500 -16 0z" fill="#2a2a2c"/><circle cx="770" cy="789.500" r="3.300" fill="#ebeaee"/><circle cx="770" cy="789.500" r="1.900" fill="#2a2a2c"/>
<path d="M797 789.700 h7.500" stroke="#8c8b92" stroke-width="1.400"/>
<path d="M813 789.500 H926" stroke="#8c8b92" stroke-width="2.400" stroke-linecap="round"/>
<circle cx="870" cy="789.500" r="6.600" fill="#fdfdfe" stroke="#d0cfd3" stroke-width="0.800"/>
<path d="M934 789.700 h8 M938 785.700 v8" stroke="#8c8b92" stroke-width="1.400"/>
<text x="961.5" y="794" font-size="13.5" font-weight="normal" fill="#8c8b92" text-anchor="start" textLength="31" lengthAdjust="spacingAndGlyphs" >100%</text>
<path d="M999.500 787.500 l4.300 4.300 l4.300 -4.300" fill="none" stroke="#8c8b92" stroke-width="1.400"/>
</svg>
<div class="abs" style="left:0;top:785px;width:12px;height:15px;background:#d0cfd2;border-top:1px solid #bdbcc0"></div>
<div class="abs" style="left:3px;top:789px;width:9px;height:9px;background:#a3a2a6;border-radius:4.500px 0 0 4.500px"></div>
<div class="abs" style="left:0;top:795px;width:4px;height:5px;background:#1a1a1c;border-radius:0 5px 0 0"></div>
<svg class="abs" style="left:930px;top:30px" width="350" height="440" viewBox="930 30 350 440">
<defs>
<clipPath id="c1"><rect x="949.6" y="46" width="288.2" height="180" rx="6.5"/></clipPath>
<clipPath id="c2"><rect x="946.8" y="248.6" width="293.2" height="204.6"/></clipPath>
<filter id="b1" x="-5%" y="-5%" width="110%" height="110%"><feGaussianBlur stdDeviation="0.8"/></filter>
<filter id="b2" x="-5%" y="-5%" width="110%" height="110%"><feGaussianBlur stdDeviation="1.6"/></filter>
<filter id="sh" x="-10%" y="-10%" width="120%" height="130%"><feGaussianBlur stdDeviation="5"/></filter>
<linearGradient id="wall1" x1="0" x2="1" y1="0" y2="0"><stop offset="0" stop-color="#b4b5af"/><stop offset="0.22" stop-color="#b0b1aa"/><stop offset="0.42" stop-color="#a8a79e"/><stop offset="0.7" stop-color="#a4a39c"/><stop offset="0.97" stop-color="#a0a09b"/><stop offset="1" stop-color="#ababa6"/></linearGradient>
<linearGradient id="sofa" x1="0" x2="0" y1="0" y2="1"><stop offset="0" stop-color="#2f5f50"/><stop offset="0.35" stop-color="#264f42"/><stop offset="1" stop-color="#1c3f34"/></linearGradient>
<pattern id="wp" x="950" y="50" width="34" height="52" patternUnits="userSpaceOnUse"><path d="M8 10 v12 m3 -14 v14 m3 -10 v10 m-8 2 h12 m2 4 l4 5 m-2 -7 l5 3" stroke="#7f7c76" stroke-width="0.9" fill="none" opacity="0.75"/><path d="M26 36 v9 m-3 -6 h6 m-5 8 l4 -3" stroke="#7f7c76" stroke-width="0.9" fill="none" opacity="0.7"/></pattern>
<pattern id="door" x="955" y="249" width="4" height="4" patternUnits="userSpaceOnUse"><rect width="4" height="4" fill="#b3b09b"/><rect width="2" height="2" fill="#a09d88"/><rect x="2" y="2" width="2" height="2" fill="#c0bda9"/></pattern>
</defs>
<rect x="949" y="52" width="289" height="180" rx="8" fill="#000" opacity="0.22" filter="url(#sh)"/>
<g clip-path="url(#c1)">
<rect x="949" y="45" width="290" height="182" fill="url(#wall1)"/>
<rect x="949" y="45" width="95" height="160" fill="url(#wp)"/>
<g filter="url(#b1)">
<path d="M1150 150 H1240 V228 H1150z" fill="#9d9c96" opacity="0.7"/>
<path d="M1190 205 H1240 V228 H1190z" fill="#8f8e88" opacity="0.7"/>
<path d="M949 45 h16 v19 l-6 3 h-10z" fill="#4a4438"/><ellipse cx="955" cy="52" rx="5.500" ry="6" fill="#8db52e"/>
<path d="M984 45 Q1001 62 1011 87 Q1021 112 1027 142 V186 L1042 181 V142 Q1041 118 1035 94 Q1024 64 1004 45z" fill="#a5a28e"/>
<path d="M984 45 Q1001 62 1011 87 Q1021 112 1027 142 V186" fill="none" stroke="#a37a30" stroke-width="1.500"/>
<path d="M1004 45 Q1024 64 1035 94 Q1041 118 1042 142 V181" fill="none" stroke="#a3803a" stroke-width="1.300"/>
<path d="M990 52 L1010 50" stroke="#8f7436" stroke-width="1"/>
<path d="M996 60 L1016 56" stroke="#8f7436" stroke-width="1"/>
<path d="M1002 70 L1022 64" stroke="#8f7436" stroke-width="1"/>
<path d="M1007 80 L1027 74" stroke="#8f7436" stroke-width="1"/>
<path d="M1012 91 L1032 85" stroke="#8f7436" stroke-width="1"/>
<path d="M1016 102 L1036 97" stroke="#8f7436" stroke-width="1"/>
<path d="M1019 113 L1038 109" stroke="#8f7436" stroke-width="1"/>
<path d="M1022 124 L1040 121" stroke="#8f7436" stroke-width="1"/>
<path d="M1025 135 L1041 133" stroke="#8f7436" stroke-width="1"/>
<rect x="1026" y="139" width="18" height="7" fill="#a08646"/>
<rect x="1030" y="150" width="10" height="30" fill="#97946c" stroke="#a8763a" stroke-width="1.300"/>
<rect x="1066" y="45" width="15" height="44" fill="#a29c80"/><rect x="1069" y="50" width="9" height="28" fill="#aaa896" stroke="#a3803a" stroke-width="1"/><rect x="1064" y="80" width="20" height="6" fill="#9c8a58"/>
<rect x="1106" y="45" width="21" height="7.500" fill="#2c7c3c"/>
<rect x="1163.200" y="78.200" width="32.600" height="24.600" fill="#1d6a36"/><rect x="1166" y="81" width="27" height="19" fill="#bfc0b8"/><path d="M1167 82 h12 v8 h-12z M1181 86 h11 v13 h-11z" fill="#9a9a90" opacity="0.8"/><path d="M1172 88 h8 v12 h-8z" fill="#e0e0da"/>
<path d="M1116.500 86.500 l10 10 l-10 10 l-10 -10z" fill="#255868"/><path d="M1116.500 90 l6.500 6.500 l-6.500 6.500 l-6.500 -6.500z" fill="#1a3d4a"/>
<path d="M1135 139 l10.500 10.500 l-10.500 10.500 l-10.500 -10.500z" fill="#2a6670"/><path d="M1135 143 l7 6.500 l-7 6.500 l-7 -6.500z" fill="#1d4852"/>
<rect x="1180" y="194.500" width="60" height="8" fill="#34447e"/><rect x="1213" y="193" width="27" height="3.500" fill="#8a8f98"/>
<ellipse cx="1222" cy="216" rx="5" ry="6" fill="#8a8577" opacity="0.8"/>
<path d="M949 204 Q975 199 1000 194 Q1030 188 1050 180 L1075 172 V228 H949z" fill="url(#sofa)"/>
<path d="M949 206 Q975 201 1000 196 Q1030 190 1050 183" stroke="#3a6e5c" stroke-width="2" fill="none" opacity="0.5"/>
<path d="M1014 228 Q1024 208 1040 198 Q1056 188 1069 181 Q1084 204 1100 209 Q1114 198 1121 167 Q1150 178 1170 186 Q1186 200 1193 228z" fill="#0e0e11"/>
<path d="M1070 178 L1067 184 Q1082 204 1100 209 Q1113 198 1121 168 L1110 150 Q1104 176 1090 192z" fill="#b38b84"/>
<path d="M1054 124 Q1058 112 1068 104 Q1082 100 1097 102 Q1108 112 1111 130 Q1113 146 1108 160 Q1100 180 1090 192 Q1084 194 1078 188 Q1066 174 1060 160 Q1054 142 1054 124z" fill="#c39d98"/>
<path d="M1082 108 Q1100 106 1107 116 Q1111 134 1107 152 Q1098 150 1092 138 Q1086 124 1082 108z" fill="#d6b1ab" opacity="0.85"/>
<path d="M1054 126 Q1056 140 1060 158 Q1064 170 1070 178 Q1068 160 1064 144 Q1060 132 1058 122z" fill="#9e7c76" opacity="0.8"/>
<path d="M1108 150 Q1106 166 1098 180 L1094 172 Q1102 162 1104 148z" fill="#9e7c76" opacity="0.7"/>
<path d="M1047 127 Q1044 100 1058 92 Q1075 84 1095 88 Q1110 91 1115 104 Q1118 118 1114 137 L1110 130 Q1108 112 1097 102 Q1082 101 1068 104 Q1058 112 1054 124 L1052 133z" fill="#211d1d"/>
<path d="M1066 158 Q1074 151 1082 153 Q1090 151 1098 156 Q1102 164 1099 175 Q1095 188 1088 193 Q1082 195 1076 186 Q1068 174 1066 158z" fill="#46302a"/>
<path d="M1075 161.500 q7 -3 14 -0.500 q-6 3.500 -14 0.500z" fill="#a06c64"/>
<path d="M1058 126 q6 -4 13 -2 M1084 121 q8 -4 16 0" stroke="#2a1f1c" stroke-width="2" fill="none"/><ellipse cx="1065" cy="132" rx="3.500" ry="1.600" fill="#6b7280"/><ellipse cx="1091" cy="128" rx="3.500" ry="1.600" fill="#6b7280"/>
<path d="M1078 130 q-4 12 -3 17 q4 3 9 0" stroke="#b08078" stroke-width="1.600" fill="none"/>
<path d="M1047 128 Q1044 142 1048 154 Q1052 162 1058 162 L1055 128z" fill="#18181a"/>
<path d="M1113 115 Q1124 114 1126.500 128 Q1128 146 1122 151 L1114 149z" fill="#1b1b1e"/>
<path d="M1124 150 Q1128 180 1134 210 L1136 228" stroke="#151517" stroke-width="1.300" fill="none"/>
</g></g>
<g clip-path="url(#c2)">
<rect x="946" y="248" width="295" height="206" fill="#2a2a30"/>
<g filter="url(#b1)">
<rect x="946" y="248" width="10" height="150" fill="#693c2b"/>
<rect x="955" y="248" width="41" height="142" fill="url(#door)"/>
<rect x="994.500" y="248" width="8" height="145" fill="#7f4d36"/>
<rect x="946.500" y="345" width="5" height="50" fill="#cdb9a0"/>
<rect x="946" y="392" width="13" height="7" fill="#e4e0dc"/>
<rect x="955" y="388" width="41" height="5" fill="#5e3626"/>
<circle cx="999" cy="322" r="2.200" fill="#5a6a9a"/>
<path d="M946 398 H1003 V454 H946z" fill="#5b59a9"/><path d="M965 388 h22 v9 h-22z" fill="#2c55a5"/>
<rect x="1002" y="248" width="3.600" height="90" fill="#e6e6ee"/>
<rect x="1005.300" y="248" width="47" height="92" fill="#1d2a42"/><rect x="1005.300" y="288" width="47" height="1.500" fill="#141d30"/>
<rect x="1050" y="248" width="50" height="40" fill="#1b2438"/>
<rect x="1086" y="248" width="3" height="60" fill="#d8d8de"/>
<rect x="1089" y="248" width="100" height="150" fill="#1d1b20"/>
<rect x="1096" y="250" width="46" height="9" fill="#b98a5c"/>
<rect x="1096" y="262" width="15" height="44" fill="#1a2336"/>
<rect x="1111" y="257" width="8" height="66" fill="#cfae82"/>
<rect x="1119" y="257" width="22" height="52" fill="#1e232d"/>
<path d="M1104 256 l5 0 l1 16 l-5 2z" fill="#2c4cb4"/><path d="M1108 268 l14 -3 l3 9 l-15 5z" fill="#c9d2e4"/>
<path d="M1125 262 l14 -5 l3 14 l-12 11 l-6 -8z" fill="#b41c2c"/>
<rect x="1140.500" y="248" width="11.500" height="146" fill="#d3b58c"/>
<rect x="1152" y="257" width="17" height="47" fill="#1a1d25"/>
<path d="M1152 248 h26 v22 h-8 l-3 8 h-8 l-3 -8 h-4z" fill="#121216"/>
<rect x="1168.500" y="272" width="9" height="118" fill="#c7a074"/>
<rect x="1122" y="305" width="47" height="15" fill="#a48c6c"/><rect x="1108" y="303" width="16" height="14" fill="#8c9296"/>
<rect x="1096" y="319.500" width="74" height="4" fill="#d8b68a"/><rect x="1150" y="311" width="21" height="8" fill="#b87a4c"/><rect x="1148" y="321" width="24" height="10" fill="#cd7d4c"/>
<rect x="1139.500" y="301" width="10" height="13" fill="#cce470"/><rect x="1138.500" y="314" width="10" height="12" fill="#bfe068"/><rect x="1139.500" y="326" width="9.500" height="12" fill="#b4dc64"/>
<rect x="1177.500" y="248" width="14" height="95" fill="#101014"/>
<rect x="1188" y="248" width="43" height="62" fill="#23262e"/>
<path d="M1189 262 q20 5 41 0" stroke="#0f1014" stroke-width="1.800" fill="none"/>
<path d="M1189 275 q20 5 41 0" stroke="#0f1014" stroke-width="1.800" fill="none"/>
<path d="M1189 288 q20 5 41 0" stroke="#0f1014" stroke-width="1.800" fill="none"/>
<path d="M1189 300 q20 5 41 0" stroke="#0f1014" stroke-width="1.800" fill="none"/>
<rect x="1191" y="309.500" width="40" height="85" fill="#d3c2a8"/>
<rect x="1227" y="248" width="14" height="103" fill="#1b1d26"/><rect x="1227" y="351" width="14" height="44" fill="#d0bfa4"/>
<rect x="1177" y="340" width="15" height="50" fill="#2a2428"/>
<rect x="1186.500" y="336" width="17" height="48" fill="#c4c6cc"/>
<rect x="1188" y="341" width="14" height="2.400" fill="#3a3a42"/>
<rect x="1188" y="346" width="14" height="2.400" fill="#3a3a42"/>
<rect x="1188" y="351" width="14" height="2.400" fill="#3a3a42"/>
<rect x="1188" y="356" width="14" height="2.400" fill="#3a3a42"/>
<rect x="1188" y="361" width="14" height="2.400" fill="#3a3a42"/>
<rect x="1188" y="366" width="14" height="2.400" fill="#3a3a42"/>
<rect x="1188" y="371" width="14" height="2.400" fill="#3a3a42"/>
<rect x="1188" y="376" width="14" height="2.400" fill="#3a3a42"/>
<rect x="1188" y="381" width="14" height="2.400" fill="#3a3a42"/>
<path d="M1137 364 L1199 319" stroke="#0c0c0e" stroke-width="4" fill="none"/><path d="M1141 370 L1203 325" stroke="#0c0c0e" stroke-width="3" fill="none"/>
<path d="M1199 320 L1218 388" stroke="#0c0c0e" stroke-width="4" fill="none"/><path d="M1205 322 L1223 386" stroke="#0c0c0e" stroke-width="2.600" fill="none"/>
<path d="M1182 333 l6 -3" stroke="#c02828" stroke-width="2"/>
<ellipse cx="1220" cy="391" rx="9" ry="4" fill="#8a8a8c"/>
<circle cx="1140" cy="366" r="4" fill="#3a3a40"/>
<path d="M1010 440 L1092 409 L1146 389.500 H1241 V454 H1000z" fill="#1d1916"/>
<rect x="1171" y="381.500" width="31" height="19" rx="3" fill="#0d0d10"/>
<path d="M1092 382 l10 -4 l6 22 l-16 8z" fill="#d8d4cc"/><path d="M1095 386 l6 -2 l4 14 l-7 3z" fill="#c05048"/>
<path d="M1241 386.500 L1156 416 Q1152 418 1151 423 L1146 454 H1241z" fill="#b9bcc2"/>
<path d="M1241 386.500 L1156 416 Q1152 418 1151 423" stroke="#e8e9ec" stroke-width="1.500" fill="none"/>
<path d="M1241 392 Q1218 398 1212 418 Q1210 432 1216 440 L1241 446z" fill="#213f90"/><path d="M1222 405 q8 -6 14 -2 q-2 8 -8 14 q-6 2 -8 -2z" fill="#8fa650"/><path d="M1226 424 q8 -2 14 4 v12 q-10 0 -16 -6z" fill="#182c60"/>
<path d="M1168 440 q10 -8 22 -6 l14 -6 l12 10 l-2 16 h-48z" fill="#2b2a30"/><path d="M1172 444 q8 -6 16 -4 l2 14 h-18z" fill="#6a4428"/>
<path d="M1198 418 q2 -6 5 -6 l0 12 q-3 2 -5 -6 M1206 414 q4 -2 4 4 q-1 6 -4 4z" fill="#3a3a3e"/>
<path d="M1120 448 L1150 438 L1147 454 H1118z" fill="#cfd0d2"/>
<path d="M984 352 Q984 346 992 346 L1004 346 V420 L990 420 Q985 400 984 352z" fill="#15151a"/>
<rect x="990" y="356" width="12" height="26" fill="#4a4d52" opacity="0.6"/>
<path d="M968 430 Q968 422 976 423 Q983 424 983 432 V454 H968z" fill="#121216"/>
<path d="M998 378 Q1000 350 1010 340 Q1030 330 1042 326 L1072 326 Q1086 326 1096 334 Q1108 345 1112 365 L1106 380 L1094 388 L1096 408 L1020 432 Q1016 405 1022 392 L1012 386z" fill="#7c7d74"/>
<path d="M1040 372 Q1060 360 1086 372 L1090 404 L1030 424z" fill="#84857c" opacity="0.7"/>
<path d="M1040 326 Q1042 340 1052 348 Q1062 350 1070 340 L1072 322z" fill="#c48c78"/>
<path d="M1044 322 q6 28 16 50" stroke="#c8c8cc" stroke-width="0.900" fill="none"/><path d="M1072 326 q-2 28 -12 46" stroke="#c8c8cc" stroke-width="0.900" fill="none"/>
<path d="M1033 300 Q1030 274 1042 266 Q1056 260 1068 266 Q1079 272 1077 296 Q1075 316 1066 327 Q1057 331 1048 324 Q1036 312 1033 300z" fill="#d5a18d"/>
<path d="M1029 298 Q1024 268 1040 258 L1043 252 Q1046 249 1049 253 L1050 256 Q1068 255 1077 270 Q1081 282 1079 294 Q1075 278 1066 273 Q1052 268 1042 276 Q1036 286 1034 302z" fill="#5a4132"/>
<path d="M1042 316 Q1050 326 1062 328 Q1070 324 1074 312 Q1064 320 1054 318z" fill="#8a5e50" opacity="0.8"/>
<path d="M1054 314 q6 -3 13 -1" stroke="#5a3428" stroke-width="1.600" fill="none"/><path d="M1046 292 q5 -2 9 0 M1064 290 q4 -2 8 0" stroke="#4a3028" stroke-width="1.400" fill="none"/>
<path d="M1085 352 L1142 394" stroke="#0c0c0f" stroke-width="6.500" fill="none" stroke-linecap="round"/>
<path d="M1084 347 L1112 370" stroke="#5d7fa8" stroke-width="8" fill="none"/>
<ellipse cx="1084" cy="341" rx="8" ry="9" transform="rotate(-40 1084 341)" fill="#9bb0cc"/><ellipse cx="1082" cy="338" rx="4" ry="5" transform="rotate(-40 1082 338)" fill="#c8d4e4"/>
<path d="M1092 368 Q1106 366 1112 380 Q1126 400 1120 414 Q1108 426 1092 432 L1080 424 Q1094 410 1094 392z" fill="#c98c74"/>
<path d="M1098 408 L1118 398 L1122 412 Q1112 424 1100 428z" fill="#4a3a36"/>
<path d="M1060 422 Q1072 414 1086 416 Q1098 420 1096 436 Q1094 448 1084 452 L1070 448 Q1066 436 1058 428z" fill="#cf907e"/>
<path d="M998 378 Q1008 376 1020 388 Q1022 410 1016 424 Q1014 440 1030 454 H990 Q986 420 990 400z" fill="#675a55"/>
<path d="M1000 386 q10 0 16 8 q0 14 -6 26 q-8 -4 -14 -2z" fill="#4c4440" opacity="0.8"/><path d="M994 424 q12 -4 20 4 q2 12 10 24 h-30z" fill="#7c675f" opacity="0.8"/>
</g><rect x="946.8" y="248.6" width="293.2" height="1" fill="#cfd0d8" opacity="0.55"/></g>
</svg>
<svg class="abs" style="left:830px;top:215px" width="20" height="26" viewBox="0 0 20 26"><path transform="translate(5.5,4) scale(0.9) translate(-5.5,-4)" d="M5.500 4 V20.500 L9.300 16.800 L12 23 L14.600 21.900 L11.900 15.800 H17z" fill="#111" stroke="#fff" stroke-width="1.200" stroke-linejoin="round"/></svg>
</body></html>
